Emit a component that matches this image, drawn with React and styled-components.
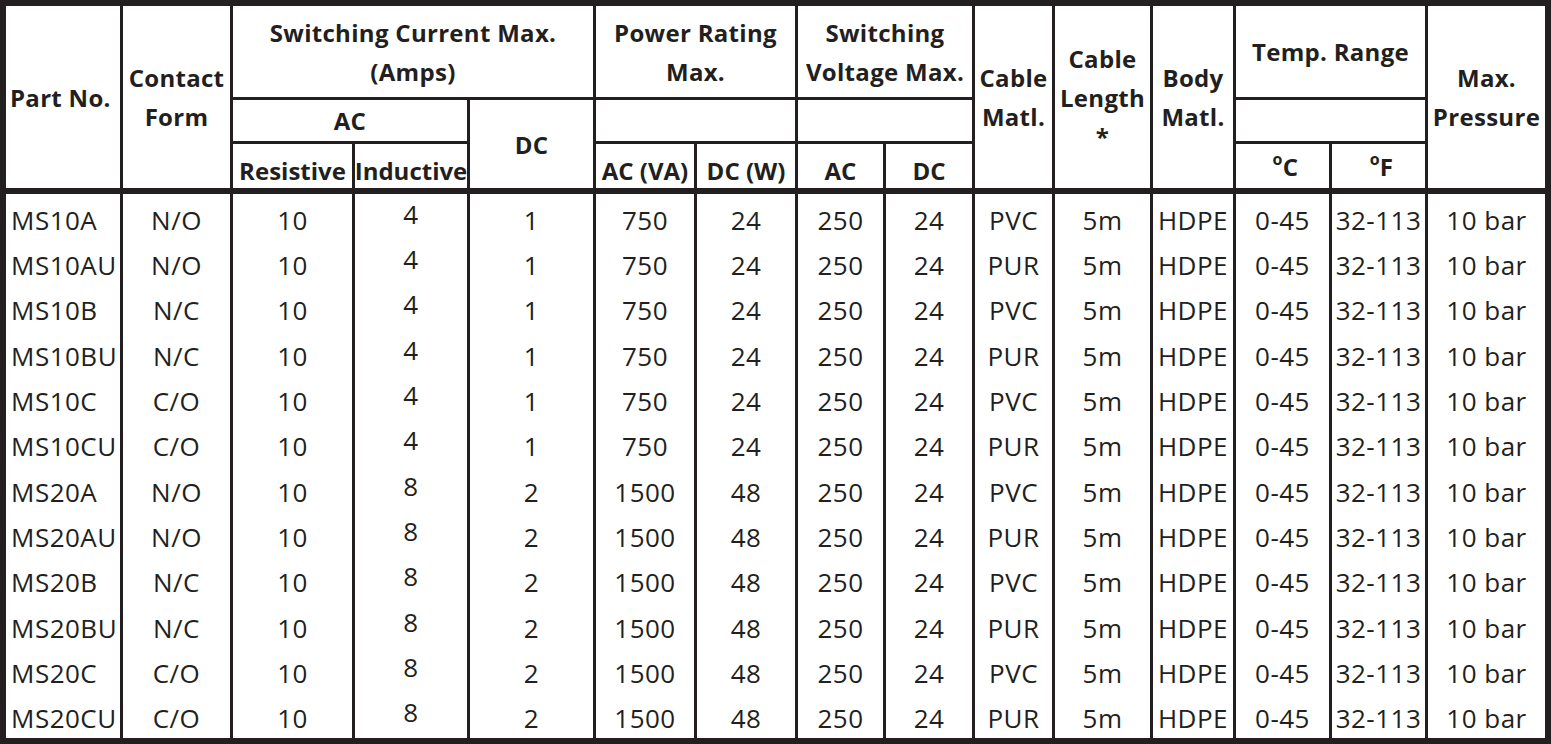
import styled, { createGlobalStyle } from "styled-components";

const INK = "#231f20";

const GlobalStyle = createGlobalStyle`
  html, body {
    margin: 0;
    padding: 0;
    background: #fff;
  }
  body {
    font-family: "Open Sans", "Liberation Sans", sans-serif;
    color: ${INK};
  }
`;

// border-box widths of each column, right rule included
const COLS = [117, 110, 122, 115, 126, 101, 101, 88, 89, 80, 98, 83, 96, 96, 117];

const Table = styled.div`
  display: grid;
  grid-template-columns: ${COLS.map((w) => w + "px").join(" ")};
  grid-template-rows: 94px 44px 50px repeat(12, 1fr);
  width: 1551px;
  height: 744px;
  box-sizing: border-box;
  border: 6px solid ${INK};
`;

const Head = styled.div`
  grid-column: span ${(p) => p.$cols || 1};
  grid-row: span ${(p) => p.$rows || 1};
  display: flex;
  align-items: center;
  justify-content: ${(p) => (p.$left ? "flex-start" : "center")};
  text-align: ${(p) => (p.$left ? "left" : "center")};
  box-sizing: border-box;
  padding: ${(p) => (p.$low ? "8px" : "0")} ${(p) => (p.$left ? "4px" : "0")} 0;
  border-right: ${(p) => (p.$last ? "none" : `3px solid ${INK}`)};
  border-bottom: ${(p) => (p.$thick ? 6 : 3)}px solid ${INK};
  font-weight: 700;
  font-size: 24px;
  letter-spacing: ${(p) => (p.$low ? "0" : "0.3px")};
  line-height: 39px;
  white-space: nowrap;
`;

const Unit = styled.span`
  display: inline-block;
  padding-left: 6px;
`;

const Deg = styled.span`
  font-size: 16px;
  vertical-align: 11px;
  line-height: 0;
`;

const Cell = styled.div`
  display: flex;
  align-items: center;
  justify-content: ${(p) => (p.$left ? "flex-start" : "center")};
  box-sizing: border-box;
  padding: ${(p) => (p.$lift ? "0 0 6px" : "6px 0 0")};
  padding-left: ${(p) => (p.$left ? "5px" : "0")};
  border-right: ${(p) => (p.$last ? "none" : `3px solid ${INK}`)};
  font-size: 26px;
  letter-spacing: 0.5px;
  white-space: nowrap;
  overflow: hidden;
`;

const forms = ["N/O", "N/O", "N/C", "N/C", "C/O", "C/O"];
const suffix = ["A", "AU", "B", "BU", "C", "CU"];

const rows = [10, 20].flatMap((size) =>
  suffix.map((s, i) => {
    const big = size === 20;
    return [
      `MS${size}${s}`,
      forms[i],
      "10",
      big ? "8" : "4",
      big ? "2" : "1",
      big ? "1500" : "750",
      big ? "48" : "24",
      "250",
      "24",
      s.endsWith("U") ? "PUR" : "PVC",
      "5m",
      "HDPE",
      "0-45",
      "32-113",
      "10 bar",
    ];
  })
);

export default function App() {
  return (
    <>
      <GlobalStyle />
      <Table>
        <Head $rows={3} $thick $left>
          Part No.
        </Head>
        <Head $rows={3} $thick>
          Contact
          <br />
          Form
        </Head>
        <Head $cols={3}>
          Switching Current Max.
          <br />
          (Amps)
        </Head>
        <Head $cols={2}>
          Power Rating
          <br />
          Max.
        </Head>
        <Head $cols={2}>
          Switching
          <br />
          Voltage Max.
        </Head>
        <Head $rows={3} $thick>
          Cable
          <br />
          Matl.
        </Head>
        <Head $rows={3} $thick>
          Cable
          <br />
          Length
          <br />*
        </Head>
        <Head $rows={3} $thick>
          Body
          <br />
          Matl.
        </Head>
        <Head $cols={2}>Temp. Range</Head>
        <Head $rows={3} $thick $last>
          Max.
          <br />
          Pressure
        </Head>

        <Head $cols={2}>AC</Head>
        <Head $rows={2} $thick>
          DC
        </Head>
        <Head $cols={2} />
        <Head $cols={2} />
        <Head $cols={2} />

        <Head $thick $low>Resistive</Head>
        <Head $thick $low>Inductive</Head>
        <Head $thick $low>AC (VA)</Head>
        <Head $thick $low>DC (W)</Head>
        <Head $thick $low>AC</Head>
        <Head $thick $low>DC</Head>
        <Head $thick>
          <Unit>
            <Deg>o</Deg>C
          </Unit>
        </Head>
        <Head $thick>
          <Unit>
            <Deg>o</Deg>F
          </Unit>
        </Head>

        {rows.map((row) =>
          row.map((v, c) => (
            <Cell
              key={row[0] + c}
              $left={c === 0}
              $lift={c === 3}
              $last={c === row.length - 1}
            >
              {v}
            </Cell>
          ))
        )}
      </Table>
    </>
  );
}
